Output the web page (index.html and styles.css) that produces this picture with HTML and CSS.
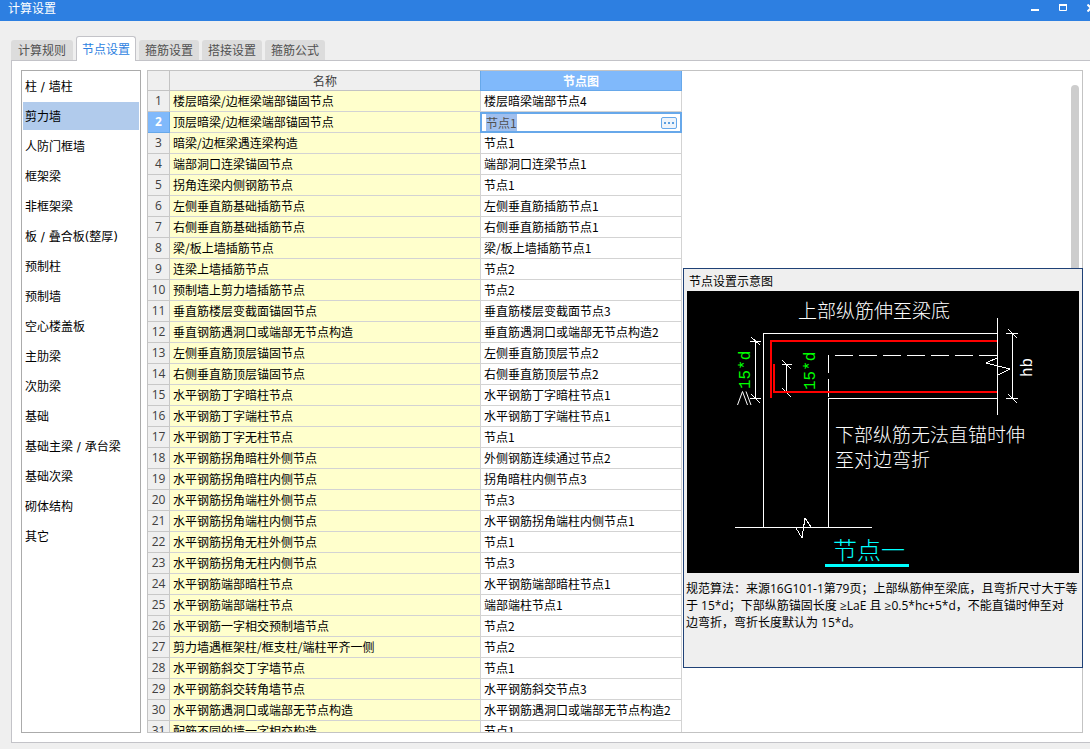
FILE: index.html
```html
<!DOCTYPE html>
<html lang="zh-CN">
<head>
<meta charset="utf-8">
<title>计算设置</title>
<link rel="stylesheet" href="styles.css">
</head>
<body>
<header class="titlebar">
  <h1 class="title">计算设置</h1>
  <div class="controls">
    <button class="control" aria-label="最小化"><svg width="8" height="8"><path d="M0 6h8" stroke="#fff" stroke-width="2"/></svg></button>
    <button class="control" aria-label="最大化"><svg width="8" height="8"><path d="M0 1h8" stroke="#fff" stroke-width="2"/><path d="M.5 1v5.500h7V1" fill="none" stroke="#fff"/></svg></button>
    <button class="control" aria-label="关闭"><svg width="8" height="8"><path d="M.5.5l7 7M7.500.5l-7 7" stroke="#fff" stroke-width="2"/></svg></button>
  </div>
</header>
<nav class="tabs" role="tablist">
  <button class="tab tab-first" role="tab">计算规则</button>
  <button class="tab tab-active" role="tab" aria-selected="true">节点设置</button>
  <button class="tab" role="tab">箍筋设置</button>
  <button class="tab" role="tab">搭接设置</button>
  <button class="tab" role="tab">箍筋公式</button>
</nav>
<main class="pane">
  <nav class="categories">
    <button class="category">柱 / 墙柱</button>
    <button class="category category-active">剪力墙</button>
    <button class="category">人防门框墙</button>
    <button class="category">框架梁</button>
    <button class="category">非框架梁</button>
    <button class="category">板 / 叠合板(整厚)</button>
    <button class="category">预制柱</button>
    <button class="category">预制墙</button>
    <button class="category">空心楼盖板</button>
    <button class="category">主肋梁</button>
    <button class="category">次肋梁</button>
    <button class="category">基础</button>
    <button class="category">基础主梁 / 承台梁</button>
    <button class="category">基础次梁</button>
    <button class="category">砌体结构</button>
    <button class="category">其它</button>
  </nav>
  <section class="content">
    <div class="sheet">
      <table class="grid">
        <colgroup><col class="col-index"><col class="col-name"><col class="col-node"></colgroup>
        <thead><tr><th class="head"></th><th class="head">名称</th><th class="head head-active">节点图</th></tr></thead>
        <tbody>
          <tr><th class="index">1</th><td class="name">楼层暗梁/边框梁端部锚固节点</td><td class="node">楼层暗梁端部节点4</td></tr>
          <tr><th class="index index-active">2</th><td class="name">顶层暗梁/边框梁端部锚固节点</td><td class="node node-edit"><div class="editor"><input class="field" type="text" value="节点1" aria-label="顶层暗梁/边框梁端部锚固节点"><button class="more" aria-label="选择节点图"><svg width="10" height="2"><path d="M0 0h2v2H0zM4 0h2v2H4zM8 0h2v2H8z" fill="#5b9fe0"/></svg></button></div></td></tr>
          <tr><th class="index">3</th><td class="name">暗梁/边框梁遇连梁构造</td><td class="node">节点1</td></tr>
          <tr><th class="index">4</th><td class="name">端部洞口连梁锚固节点</td><td class="node">端部洞口连梁节点1</td></tr>
          <tr><th class="index">5</th><td class="name">拐角连梁内侧钢筋节点</td><td class="node">节点1</td></tr>
          <tr><th class="index">6</th><td class="name">左侧垂直筋基础插筋节点</td><td class="node">左侧垂直筋插筋节点1</td></tr>
          <tr><th class="index">7</th><td class="name">右侧垂直筋基础插筋节点</td><td class="node">右侧垂直筋插筋节点1</td></tr>
          <tr><th class="index">8</th><td class="name">梁/板上墙插筋节点</td><td class="node">梁/板上墙插筋节点1</td></tr>
          <tr><th class="index">9</th><td class="name">连梁上墙插筋节点</td><td class="node">节点2</td></tr>
          <tr><th class="index">10</th><td class="name">预制墙上剪力墙插筋节点</td><td class="node">节点2</td></tr>
          <tr><th class="index">11</th><td class="name">垂直筋楼层变截面锚固节点</td><td class="node">垂直筋楼层变截面节点3</td></tr>
          <tr><th class="index">12</th><td class="name">垂直钢筋遇洞口或端部无节点构造</td><td class="node">垂直筋遇洞口或端部无节点构造2</td></tr>
          <tr><th class="index">13</th><td class="name">左侧垂直筋顶层锚固节点</td><td class="node">左侧垂直筋顶层节点2</td></tr>
          <tr><th class="index">14</th><td class="name">右侧垂直筋顶层锚固节点</td><td class="node">右侧垂直筋顶层节点2</td></tr>
          <tr><th class="index">15</th><td class="name">水平钢筋丁字暗柱节点</td><td class="node">水平钢筋丁字暗柱节点1</td></tr>
          <tr><th class="index">16</th><td class="name">水平钢筋丁字端柱节点</td><td class="node">水平钢筋丁字端柱节点1</td></tr>
          <tr><th class="index">17</th><td class="name">水平钢筋丁字无柱节点</td><td class="node">节点1</td></tr>
          <tr><th class="index">18</th><td class="name">水平钢筋拐角暗柱外侧节点</td><td class="node">外侧钢筋连续通过节点2</td></tr>
          <tr><th class="index">19</th><td class="name">水平钢筋拐角暗柱内侧节点</td><td class="node">拐角暗柱内侧节点3</td></tr>
          <tr><th class="index">20</th><td class="name">水平钢筋拐角端柱外侧节点</td><td class="node">节点3</td></tr>
          <tr><th class="index">21</th><td class="name">水平钢筋拐角端柱内侧节点</td><td class="node">水平钢筋拐角端柱内侧节点1</td></tr>
          <tr><th class="index">22</th><td class="name">水平钢筋拐角无柱外侧节点</td><td class="node">节点1</td></tr>
          <tr><th class="index">23</th><td class="name">水平钢筋拐角无柱内侧节点</td><td class="node">节点3</td></tr>
          <tr><th class="index">24</th><td class="name">水平钢筋端部暗柱节点</td><td class="node">水平钢筋端部暗柱节点1</td></tr>
          <tr><th class="index">25</th><td class="name">水平钢筋端部端柱节点</td><td class="node">端部端柱节点1</td></tr>
          <tr><th class="index">26</th><td class="name">水平钢筋一字相交预制墙节点</td><td class="node">节点2</td></tr>
          <tr><th class="index">27</th><td class="name">剪力墙遇框架柱/框支柱/端柱平齐一侧</td><td class="node">节点2</td></tr>
          <tr><th class="index">28</th><td class="name">水平钢筋斜交丁字墙节点</td><td class="node">节点1</td></tr>
          <tr><th class="index">29</th><td class="name">水平钢筋斜交转角墙节点</td><td class="node">水平钢筋斜交节点3</td></tr>
          <tr><th class="index">30</th><td class="name">水平钢筋遇洞口或端部无节点构造</td><td class="node">水平钢筋遇洞口或端部无节点构造2</td></tr>
          <tr><th class="index">31</th><td class="name">配筋不同的墙一字相交构造</td><td class="node">节点1</td></tr>
        </tbody>
      </table>
      <div class="scrollbar"></div>
    </div>
    <aside class="preview">
      <h2 class="preview-title">节点设置示意图</h2>
      <svg class="diagram" viewBox="0 0 392 282" role="img" aria-label="节点一">
        <rect width="392" height="282" fill="#000"/>
        <g fill="none" stroke="#fff" shape-rendering="crispEdges">
          <path d="M310.500 42.500H76.500V236M141.500 236V107.500H310.500M310.500 27V124M48 236.500H185"/>
          <path d="M141.500 106V64.500H310" stroke-dasharray="18 6"/>
          <path d="M68.500 50V108M63 50.500H74M63 107.500H74M64 46l9 8M64 103l9 9"/>
          <path d="M99.500 73V101M95 73.500H105M95 101.500H105M95 69l9 9M95 97l9 9"/>
          <path d="M325.500 42V107M319 42.500H331M319 107.500H331M321 38l9 9M321 103l9 9"/>
          <path d="M310 67L299 72L323 78L311 84"/>
          <path d="M109 237L115 247L118 227L124 236"/>
        </g>
        <path d="M310 50H84V107M87 73V101H310" fill="none" stroke="#f00" stroke-width="2" shape-rendering="crispEdges"/>
        <path d="M138 274.500H222" stroke="#0ff" stroke-width="3"/>
        <g class="cad">
          <text x="111" y="27">上部纵筋伸至梁底</text>
          <text x="148" y="151">下部纵筋无法直锚时伸</text>
          <text x="148" y="176">至对边弯折</text>
          <text class="cad-name" x="146" y="268">节点一</text>
        </g>
        <path d="M50.500 114L55.500 100.500L60.500 114M59 100.500L64 114" fill="none" stroke="#fff"/>
        <g class="dimension">
          <text class="green" transform="translate(63 98) rotate(-90)">15*d</text>
          <text class="green" transform="translate(128 99) rotate(-90)">15*d</text>
          <text class="white" transform="translate(345 86) rotate(-90)">hb</text>
        </g>
      </svg>
      <p class="preview-text">规范算法：来源16G101-1第79页；上部纵筋伸至梁底，且弯折尺寸大于等于 15*d；下部纵筋锚固长度 ≥LaE 且 ≥0.5*hc+5*d，不能直锚时伸至对<br>边弯折，弯折长度默认为 15*d。</p>
    </aside>
  </section>
</main>
</body>
</html>
```
FILE: styles.css
```css
* { box-sizing: border-box; }

body {
  margin: 0;
  height: 100vh;
  display: flex;
  flex-direction: column;
  overflow: hidden;
  background: #efefef;
  color: #000;
  font: 12px/20px "Noto Sans CJK SC", sans-serif;
}

button, input {
  margin: 0;
  padding: 0;
  border: 0;
  background: none;
  color: inherit;
  font: inherit;
}

.titlebar {
  display: flex;
  flex: none;
  justify-content: space-between;
  height: 21px;
  padding-left: 8px;
  overflow: hidden;
  background: #2d7fe1;
  color: #fff;
}
.title { margin: 0; font: inherit; line-height: 16px; }
.controls { display: flex; gap: 20px; margin-right: -5px; padding-top: 4px; }
.control { display: flex; width: 8px; height: 8px; }

.tabs {
  display: flex;
  flex: none;
  align-items: flex-end;
  gap: 3px;
  height: 39px;
  padding-left: 11px;
}
.tab {
  height: 20px;
  padding: 0 6px;
  border-radius: 3px 3px 0 0;
  background: #dcdcdc;
  color: #505050;
}
.tab-first { padding: 0 7px; }
.tab-active {
  z-index: 1;
  height: 25px;
  margin-bottom: -1px;
  padding: 0 5px;
  border: 1px solid #c3c3c8;
  border-bottom: 0;
  background: #fff;
  color: #2d7fe1;
}

.pane {
  display: flex;
  flex: 1;
  gap: 6px;
  min-height: 0;
  margin: 0 0 6px 11px;
  padding: 9px 7px 9px 9px;
  border: 1px solid #c3c3c8;
  border-right: 0;
  background: #fff;
}

.categories {
  display: flex;
  flex: none;
  flex-direction: column;
  gap: 2px;
  width: 120px;
  padding: 1px;
  border: 1px solid #ababab;
  font-family: "DejaVu Sans", "Noto Sans CJK SC", sans-serif;
}
.category {
  flex: none;
  height: 28px;
  padding: 2px 0 0 2px;
  text-align: left;
  white-space: nowrap;
}
.category-active { background: #b1cbec; }

.content { position: relative; display: flex; flex: 1; min-width: 0; }
.sheet {
  display: flex;
  flex: 1;
  justify-content: space-between;
  overflow: hidden;
  border: 1px solid #c3c3c3;
}
.scrollbar {
  width: 8px;
  height: 60%;
  margin: 14px 3px 0 0;
  border-radius: 4px;
  background: #cdcdcd;
}

.grid {
  flex: none;
  align-self: flex-start;
  width: 534px;
  table-layout: fixed;
  border-collapse: separate;
  border-spacing: 0;
}
.col-index { width: 22px; }
.col-name { width: 311px; }
.head, .index, .name, .node {
  height: 21px;
  padding: 0;
  border: solid #d3d3d3;
  border-width: 0 1px 1px 0;
  font-weight: normal;
  white-space: nowrap;
}
.head { height: 20px; line-height: 19px; background: #efefef; border-color: #c3c3c3; color: #404040; }
.head-active {
  background: #80b9fb;
  border-color: #67a8ea;
  box-shadow: -1px 0 #67a8ea;
  color: #fff;
  font-weight: bold;
}
.index {
  background: #efefef;
  border-color: #c8c8c8;
  color: #404040;
  font-family: "Open Sans", sans-serif;
  text-align: center;
}
.index-active {
  background: #80b9fb;
  border-color: #67a8ea;
  color: #fff;
  font-weight: bold;
}
.name { padding-left: 3px; background: #ffffcc; }
.node { padding-left: 3px; }
.node-edit { padding: 0; border: 0; }
.editor {
  display: flex;
  align-items: center;
  height: 21px;
  margin-left: -1px;
  padding: 0 3px 0 4px;
  border: 2px solid #67a8ea;
  background: #fff;
}
.field {
  flex: 1;
  min-width: 0;
  height: 17px;
  background: linear-gradient(#a0bfee, #a0bfee) no-repeat 0 / 31px 100%;
  color: #505050;
}
.more {
  display: flex;
  align-items: center;
  justify-content: center;
  width: 16px;
  height: 12px;
  border: 1px solid #67a8ea;
  border-radius: 2px;
  background: #eef4fb;
}

.preview {
  position: absolute;
  top: 198px;
  right: 0;
  width: 400px;
  height: 400px;
  padding: 3px;
  border: 1px solid #1f4176;
  background: #efefef;
}
.preview-title { margin: 0; padding: 0 0 2px 2px; font: inherit; line-height: 17px; }
.diagram { display: block; width: 392px; height: 282px; }
.preview-text {
  margin: 7px -2px 0 -1px;
  font-family: "Open Sans", "Noto Sans CJK SC", sans-serif;
  line-height: 17px;
}

.cad { fill: #fff; font-size: 19px; font-weight: 300; }
.cad-name { fill: #0ff; font-size: 24px; }
.dimension { font: 16px "Liberation Mono", monospace; }
.green { fill: #0f0; }
.white { fill: #fff; }
```
